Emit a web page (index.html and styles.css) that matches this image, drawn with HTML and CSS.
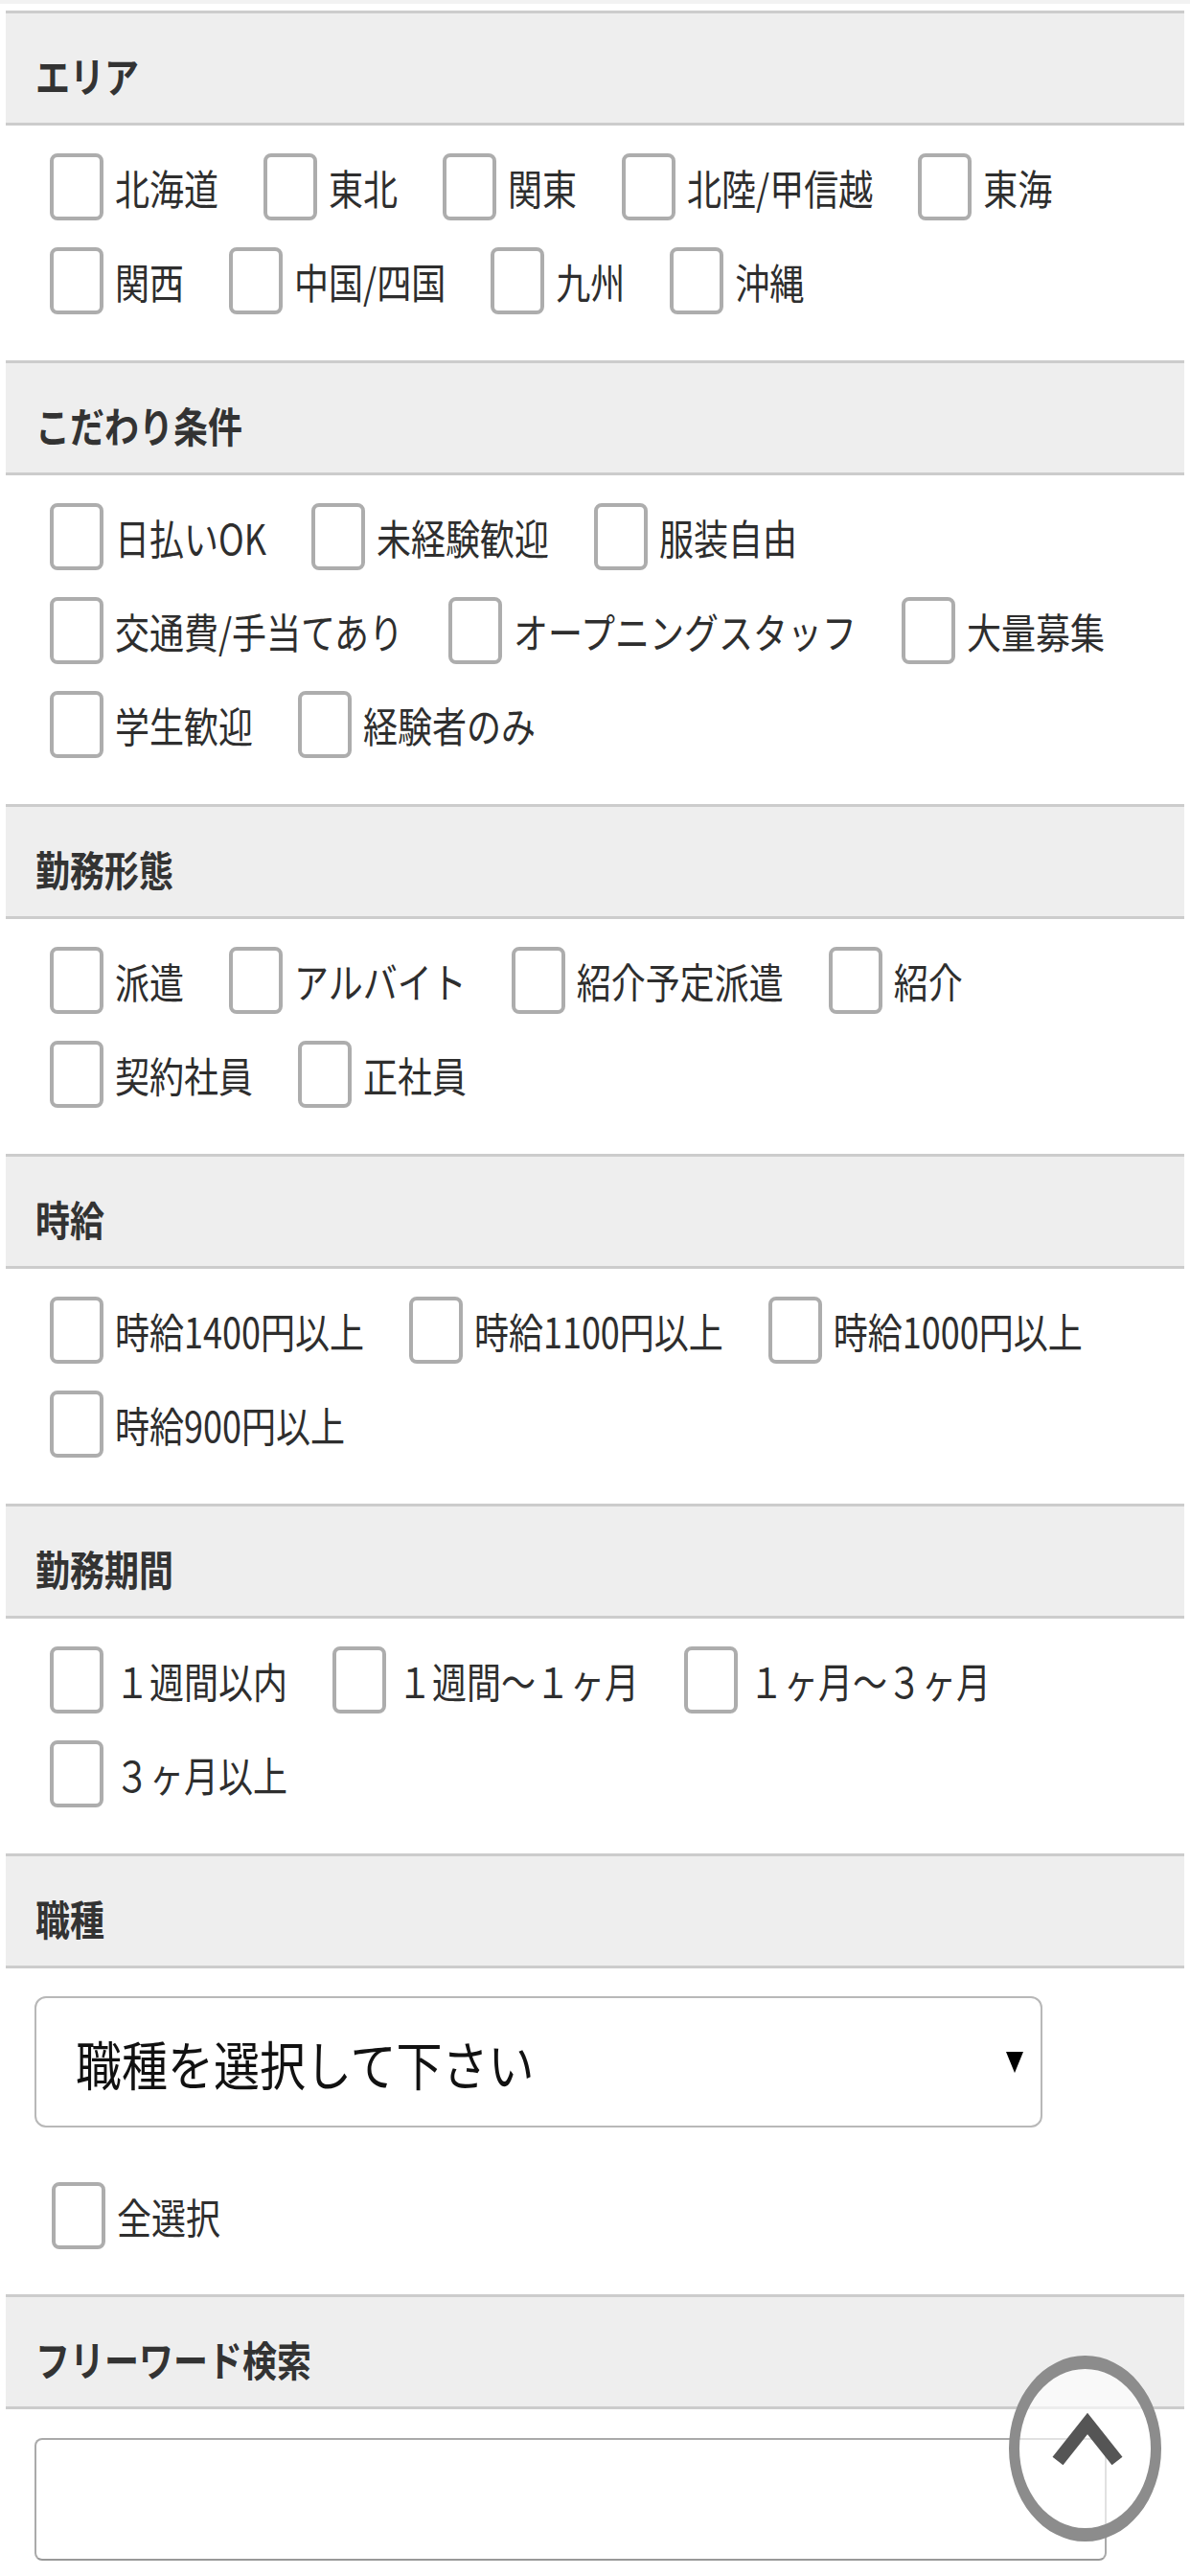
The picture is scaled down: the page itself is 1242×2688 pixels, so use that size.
FILE: index.html
```html
<!DOCTYPE html>
<html lang="ja">
<head>
  <meta charset="UTF-8">
  <meta name="viewport" content="width=device-width, initial-scale=1.0">
  <title>求人検索</title>
  <link rel="stylesheet" href="styles.css">
</head>
<body>
  <div class="topline"></div>
  <form class="search">
    <section class="block">
      <h2 class="block-head"><span>エリア</span></h2>
      <div class="opts">
        <label class="opt"><input type="checkbox"><span>北海道</span></label>
        <label class="opt"><input type="checkbox"><span>東北</span></label>
        <label class="opt"><input type="checkbox"><span>関東</span></label>
        <label class="opt"><input type="checkbox"><span>北陸/甲信越</span></label>
        <label class="opt"><input type="checkbox"><span>東海</span></label>
        <label class="opt"><input type="checkbox"><span>関西</span></label>
        <label class="opt"><input type="checkbox"><span>中国/四国</span></label>
        <label class="opt"><input type="checkbox"><span>九州</span></label>
        <label class="opt"><input type="checkbox"><span>沖縄</span></label>
      </div>
    </section>

    <section class="block">
      <h2 class="block-head"><span>こだわり条件</span></h2>
      <div class="opts">
        <label class="opt"><input type="checkbox"><span>日払いOK</span></label>
        <label class="opt"><input type="checkbox"><span>未経験歓迎</span></label>
        <label class="opt"><input type="checkbox"><span>服装自由</span></label>
        <label class="opt"><input type="checkbox"><span>交通費/手当てあり</span></label>
        <label class="opt"><input type="checkbox"><span>オープニングスタッフ</span></label>
        <label class="opt"><input type="checkbox"><span>大量募集</span></label>
        <label class="opt"><input type="checkbox"><span>学生歓迎</span></label>
        <label class="opt"><input type="checkbox"><span>経験者のみ</span></label>
      </div>
    </section>

    <section class="block">
      <h2 class="block-head"><span>勤務形態</span></h2>
      <div class="opts">
        <label class="opt"><input type="checkbox"><span>派遣</span></label>
        <label class="opt"><input type="checkbox"><span>アルバイト</span></label>
        <label class="opt"><input type="checkbox"><span>紹介予定派遣</span></label>
        <label class="opt"><input type="checkbox"><span>紹介</span></label>
        <label class="opt"><input type="checkbox"><span>契約社員</span></label>
        <label class="opt"><input type="checkbox"><span>正社員</span></label>
      </div>
    </section>

    <section class="block">
      <h2 class="block-head"><span>時給</span></h2>
      <div class="opts">
        <label class="opt"><input type="checkbox"><span>時給1400円以上</span></label>
        <label class="opt"><input type="checkbox"><span>時給1100円以上</span></label>
        <label class="opt"><input type="checkbox"><span>時給1000円以上</span></label>
        <label class="opt"><input type="checkbox"><span>時給900円以上</span></label>
      </div>
    </section>

    <section class="block">
      <h2 class="block-head"><span>勤務期間</span></h2>
      <div class="opts">
        <label class="opt"><input type="checkbox"><span>１週間以内</span></label>
        <label class="opt"><input type="checkbox"><span>１週間～１ヶ月</span></label>
        <label class="opt"><input type="checkbox"><span>１ヶ月～３ヶ月</span></label>
        <label class="opt"><input type="checkbox"><span>３ヶ月以上</span></label>
      </div>
    </section>

    <section class="block">
      <h2 class="block-head"><span>職種</span></h2>
      <div class="job">
        <div class="select">
          <span>職種を選択して下さい</span>
          <i class="arrow"></i>
        </div>
      </div>
      <div class="opts opts-all">
        <label class="opt"><input type="checkbox"><span>全選択</span></label>
      </div>
    </section>

    <section class="block">
      <h2 class="block-head"><span>フリーワード検索</span></h2>
      <div class="word">
        <input type="text" class="word-input">
      </div>
    </section>
  </form>

  <a class="to-top" href="#">
    <svg width="137" height="166" viewBox="0 0 137 166">
      <polyline points="40,96 71,57 102,96" fill="none" stroke="#555" stroke-width="14"/>
    </svg>
  </a>
</body>
</html>
```

FILE: styles.css
```css
* {
  box-sizing: border-box;
}

body {
  margin: 0;
  background-color: #fff;
  color: #333;
  font-family: "Noto Sans CJK JP", "Noto Sans", sans-serif;
}

.topline {
  height: 4px;
  background-color: #f2f2f2;
}

.search {
  margin: 0 6px;
  padding-top: 7px;
}

.block-head {
  margin: 0;
  height: 120px;
  padding: 15px 0 0 31px;
  line-height: 99px;
  font-size: 36px;
  font-weight: bold;
  color: #333;
  background-color: #eee;
  border-top: 3px solid #ccc;
  border-bottom: 3px solid #ccc;
}

.block-head span,
.opt span {
  display: inline-block;
  line-height: 1;
  transform: scaleY(1.2);
}

.opts {
  display: flex;
  flex-wrap: wrap;
  gap: 28px 47px;
  padding: 29px 0 48px 46px;
}

.opt {
  display: flex;
  align-items: center;
  font-size: 36px;
  color: #2e2e2e;
}

.opt input {
  appearance: none;
  -webkit-appearance: none;
  margin: 0 12px 0 0;
  width: 56px;
  height: 70px;
  border: 4px solid #adadad;
  border-radius: 8px;
  background-color: #fff;
}

.job {
  padding: 29px 0 0 30px;
}

.select {
  display: flex;
  align-items: center;
  justify-content: space-between;
  width: 1052px;
  height: 137px;
  padding: 0 18px 0 41px;
  border: 2px solid #b8b8b8;
  border-radius: 12px;
  font-size: 48px;
  color: #111;
}

.select span {
  display: inline-block;
  line-height: 1;
  transform: scaleY(1.14);
}

.arrow {
  width: 0;
  height: 0;
  border-left: 9px solid transparent;
  border-right: 9px solid transparent;
  border-top: 22px solid #000;
}

.opts-all {
  padding: 57px 0 47px 48px;
}

.word {
  padding: 30px 0 13px 30px;
}

.word-input {
  display: block;
  width: 1119px;
  height: 128px;
  border: 2px solid #aaa;
  border-bottom-color: #999;
  border-radius: 8px;
  background-color: #fff;
}

.to-top {
  position: fixed;
  right: 30px;
  bottom: 36px;
  width: 159px;
  height: 194px;
  border-style: solid;
  border-color: #8c8c8c;
  border-width: 14px 11px;
  border-radius: 50%;
  background-color: rgba(255, 255, 255, 0.65);
}

.to-top svg {
  display: block;
}
```
